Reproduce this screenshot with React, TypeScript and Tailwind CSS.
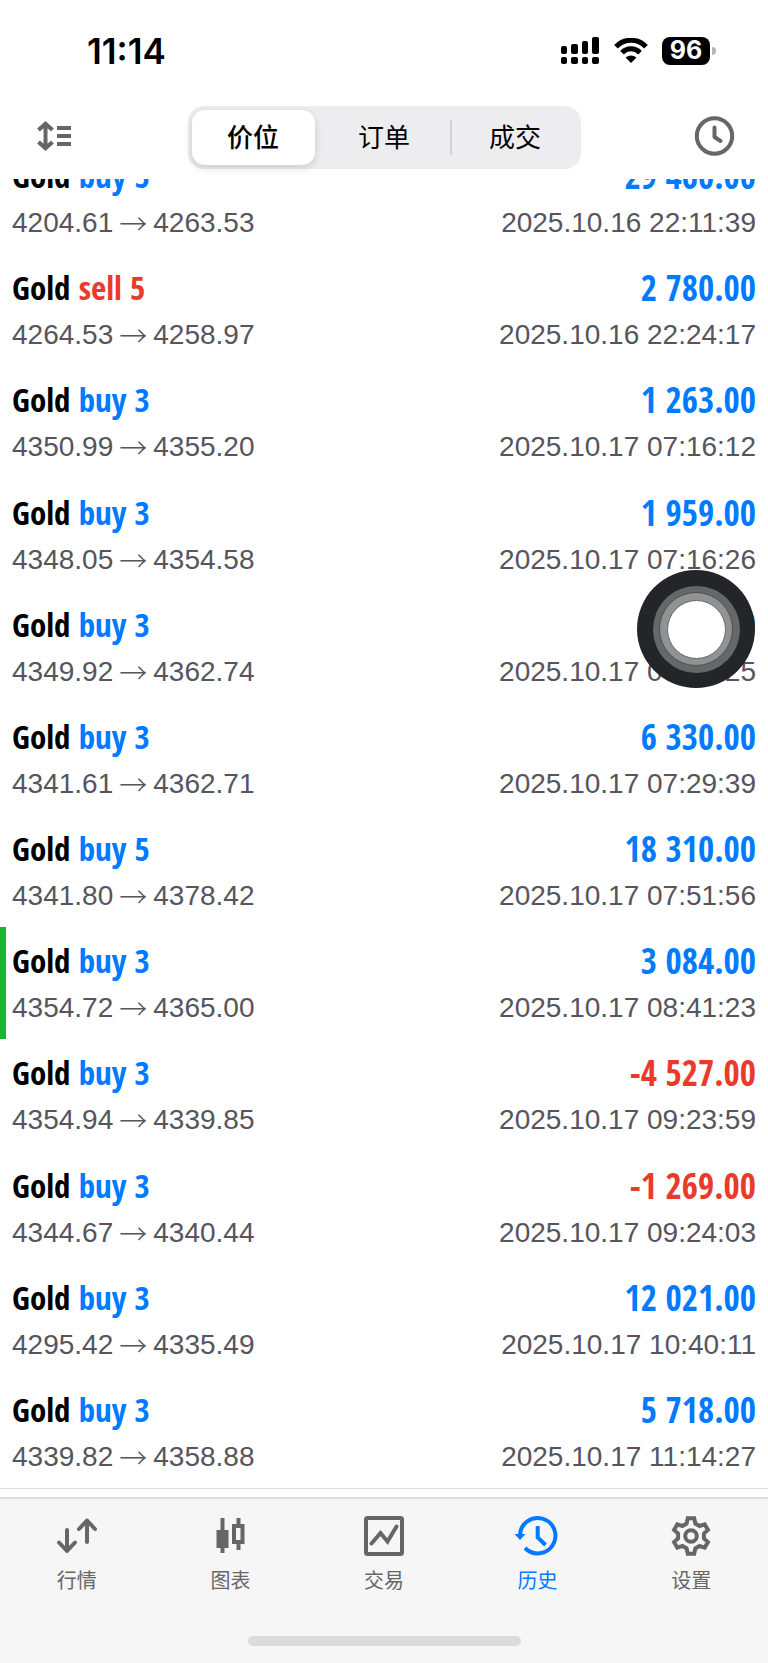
import { useState } from 'react'
import type { ReactNode } from 'react'
import clsx from 'clsx'

type Deal = {
  side: 'buy' | 'sell'
  volume: number
  open: string
  close: string
  profit: string
  time: string
  marked?: boolean
}

const deals: Deal[] = [
  { side: 'buy', volume: 5, open: '4204.61', close: '4263.53', profit: '29 460.00', time: '2025.10.16 22:11:39' },
  { side: 'sell', volume: 5, open: '4264.53', close: '4258.97', profit: '2 780.00', time: '2025.10.16 22:24:17' },
  { side: 'buy', volume: 3, open: '4350.99', close: '4355.20', profit: '1 263.00', time: '2025.10.17 07:16:12' },
  { side: 'buy', volume: 3, open: '4348.05', close: '4354.58', profit: '1 959.00', time: '2025.10.17 07:16:26' },
  { side: 'buy', volume: 3, open: '4349.92', close: '4362.74', profit: '3 846.00', time: '2025.10.17 07:29:25' },
  { side: 'buy', volume: 3, open: '4341.61', close: '4362.71', profit: '6 330.00', time: '2025.10.17 07:29:39' },
  { side: 'buy', volume: 5, open: '4341.80', close: '4378.42', profit: '18 310.00', time: '2025.10.17 07:51:56' },
  { side: 'buy', volume: 3, open: '4354.72', close: '4365.00', profit: '3 084.00', time: '2025.10.17 08:41:23', marked: true },
  { side: 'buy', volume: 3, open: '4354.94', close: '4339.85', profit: '-4 527.00', time: '2025.10.17 09:23:59' },
  { side: 'buy', volume: 3, open: '4344.67', close: '4340.44', profit: '-1 269.00', time: '2025.10.17 09:24:03' },
  { side: 'buy', volume: 3, open: '4295.42', close: '4335.49', profit: '12 021.00', time: '2025.10.17 10:40:11' },
  { side: 'buy', volume: 3, open: '4339.82', close: '4358.88', profit: '5 718.00', time: '2025.10.17 11:14:27' },
]

const segments = ['价位', '订单', '成交']

function StatusBar() {
  return (
    <div className="flex h-[102px] items-center justify-between pr-[52px] pl-[87px] font-['Inter',sans-serif]">
      <span className="text-[35px] leading-10 font-semibold">11:14</span>
      <div className="flex items-center">
        <svg width="40" height="28" viewBox="0 0 40 28" aria-hidden="true">
          <rect x="1" y="9" width="6" height="8" rx="2" />
          <rect x="11" y="7" width="7" height="10" rx="2" />
          <rect x="22" y="4" width="6" height="13" rx="2" />
          <rect x="32" y="0" width="7" height="17" rx="2" />
          <rect x="1" y="20" width="6" height="7" rx="2" />
          <rect x="11" y="20" width="7" height="7" rx="2" />
          <rect x="22" y="20" width="6" height="7" rx="2" />
          <rect x="32" y="20" width="7" height="7" rx="2" />
        </svg>
        <svg className="ml-3.5" width="34" height="26" viewBox="0 0 34 26" fill="none" stroke="#000" strokeWidth="5" aria-hidden="true">
          <path d="M2 8.7A20.6 20.6 0 0 1 32 8.7" />
          <path d="M8 14.7A12.5 12.5 0 0 1 26 14.7" />
          <path d="M11.5 19.5Q17 15.5 22.5 19.5L17 25Z" fill="#000" stroke="none" />
        </svg>
        <span className="ml-3.5 flex h-7 w-12 items-center justify-center rounded-lg bg-black text-[25px] font-bold text-white">96</span>
        <span className="ml-0.5 h-2 w-1 rounded-r-full bg-[#b5b5b5]" />
      </div>
    </div>
  )
}

function Header() {
  const [active, setActive] = useState(0)

  return (
    <header className="relative z-10 h-[179px] bg-white">
      <StatusBar />
      <div className="flex items-center justify-between px-[33px] pt-1">
        <button type="button" aria-label="排序">
          <svg width="42" height="42" viewBox="0 0 42 42" fill="none" stroke="#666" strokeWidth="4">
            <path d="M12.5 7V31M5.5 13L12.5 6.7L19.5 13M5.5 25L12.5 31.3L19.5 25" />
            <path d="M24 11H38M24 19H38M24 27H38" />
          </svg>
        </button>
        <div className="flex h-[63px] w-[393px] rounded-[16px] bg-[#ededef]">
          {segments.map((label, i) => (
            <div key={label} className="relative flex-1 p-1">
              {i > 0 && i - 1 !== active && i !== active && (
                <span className="absolute top-3.5 left-0 h-[35px] w-0.5 bg-[#d4d4d6]" />
              )}
              <button
                type="button"
                onClick={() => setActive(i)}
                className={clsx(
                  'h-full w-full pt-0.5 text-[26px]',
                  i === active ? 'rounded-[13px] bg-white font-medium shadow-[0_3px_8px_rgba(0,0,0,0.14)]' : '',
                )}
              >
                {label}
              </button>
            </div>
          ))}
        </div>
        <button type="button" aria-label="时间">
          <svg width="42" height="42" viewBox="0 0 42 42" fill="none" stroke="#666" strokeWidth="4" overflow="visible">
            <circle cx="21.5" cy="19" r="17.7" />
            <path d="M21.5 10.5V20L27.5 24" strokeLinecap="round" strokeLinejoin="round" />
          </svg>
        </button>
      </div>
    </header>
  )
}

function DealRow({ deal }: { deal: Deal }) {
  return (
    <li className={clsx('min-h-[100px] flex-1 border-l-[6px] pt-[11px] pr-3 pl-1.5', deal.marked ? 'border-[#17b82e]' : 'border-transparent')}>
      <div className="flex h-12 items-start justify-between font-['Open_Sans_Condensed','Roboto_Condensed',sans-serif] leading-[46px] font-bold">
        <p className="text-[33px]">
          Gold <span className={deal.side === 'buy' ? 'text-[#007aff]' : 'text-[#e93b2b]'}>{deal.side} {deal.volume}</span>
        </p>
        <p className={clsx('text-[35px]', deal.profit.startsWith('-') ? 'text-[#e93b2b]' : 'text-[#007aff]')}>{deal.profit}</p>
      </div>
      <div className="flex items-center justify-between text-[28px] leading-[44px] text-[#56555c]">
        <p className="flex items-center gap-1.5">
          <span>{deal.open}</span>
          <span className="font-['Noto_Sans_CJK_SC',sans-serif] font-light">→</span>
          <span>{deal.close}</span>
        </p>
        <time>{deal.time}</time>
      </div>
    </li>
  )
}

// one tooth of the gear, repeated every 60 degrees
const tooth = [[-4.4, -12.4], [-3.2, -17.7], [3.2, -17.7], [4.4, -12.4]]
const gearPoints = [0, 1, 2, 3, 4, 5]
  .flatMap(n => {
    const a = (n * Math.PI) / 3
    return tooth.map(([x, y]) => `${22 + x * Math.cos(a) - y * Math.sin(a)},${22 + x * Math.sin(a) + y * Math.cos(a)}`)
  })
  .join(' ')

const tabs: { label: string; icon: ReactNode }[] = [
  {
    label: '行情',
    icon: (
      <g strokeLinecap="round" strokeLinejoin="round">
        <path d="M12 16V37M4 28.5L12 37L20 28.5" />
        <path d="M32 28V6.5M24 15L32 6.5L40 15" />
      </g>
    ),
  },
  {
    label: '图表',
    icon: (
      <>
        <path d="M14.5 4V39M30.5 4V11M30.5 29V36" />
        <rect x="8.5" y="16" width="12" height="18" fill="currentColor" stroke="none" />
        <rect x="26" y="12" width="8.5" height="16" />
      </>
    ),
  },
  {
    label: '交易',
    icon: (
      <>
        <rect x="4" y="4" width="36" height="36" rx="1.5" />
        <path d="M9.5 29.5L18.5 19L25.5 27.5L34.5 12.5" strokeLinecap="round" />
      </>
    ),
  },
  {
    label: '历史',
    icon: (
      <>
        <path d="M4 21.7A17.7 17.7 0 1 1 9 34" />
        <path d="M-1.5 20H9.5L4 26Z" fill="currentColor" stroke="none" />
        <path d="M21.7 12V23.5L29.5 31" />
      </>
    ),
  },
  {
    label: '设置',
    icon: (
      <>
        <polygon points={gearPoints} />
        <circle cx="22" cy="22" r="5.8" />
      </>
    ),
  },
]

function TabBar() {
  const [active, setActive] = useState('历史')

  return (
    <footer className="flex h-[166px] flex-col border-t-2 border-[#dcdcdc] bg-[#f6f6f6]">
      <nav className="flex pt-[15px]">
        {tabs.map(({ label, icon }) => (
          <button
            key={label}
            type="button"
            onClick={() => setActive(label)}
            className={clsx('flex flex-1 flex-col items-center gap-2 text-[20px] leading-[30px]', label === active ? 'text-[#007aff]' : 'text-[#666]')}
          >
            <svg width="44" height="44" viewBox="0 0 44 44" fill="none" stroke="currentColor" strokeWidth="4" overflow="visible" aria-hidden="true">
              {icon}
            </svg>
            {label}
          </button>
        ))}
      </nav>
      <div className="mx-auto mt-auto mb-[17px] h-2.5 w-[273px] rounded-full bg-[#dcdcdc]" />
    </footer>
  )
}

export default function App() {
  return (
    <div className="relative flex min-h-screen flex-col bg-white font-['Liberation_Sans','Noto_Sans_CJK_SC',sans-serif] text-black">
      <Header />
      {/* list is scrolled, first row slides under the header */}
      <ul className="-mt-[37px] flex flex-1 flex-col">
        {deals.map(d => <DealRow key={d.time} deal={d} />)}
      </ul>
      <div className="h-[9px] border-t border-[#dcdcdc]" />
      <TabBar />

      {/* Floating touch button */}
      <button
        type="button"
        aria-label="辅助触控"
        className="absolute top-[570px] right-[13px] z-20 flex size-[118px] items-center justify-center rounded-full bg-[#232528]"
      >
        <span className="flex size-[87px] items-center justify-center rounded-full bg-[#666769]">
          <span className="flex size-[74px] items-center justify-center rounded-full border border-[#505153] bg-[#919294]">
            <span className="size-[59px] rounded-full border border-[#66676a] bg-white" />
          </span>
        </span>
      </button>
    </div>
  )
}
